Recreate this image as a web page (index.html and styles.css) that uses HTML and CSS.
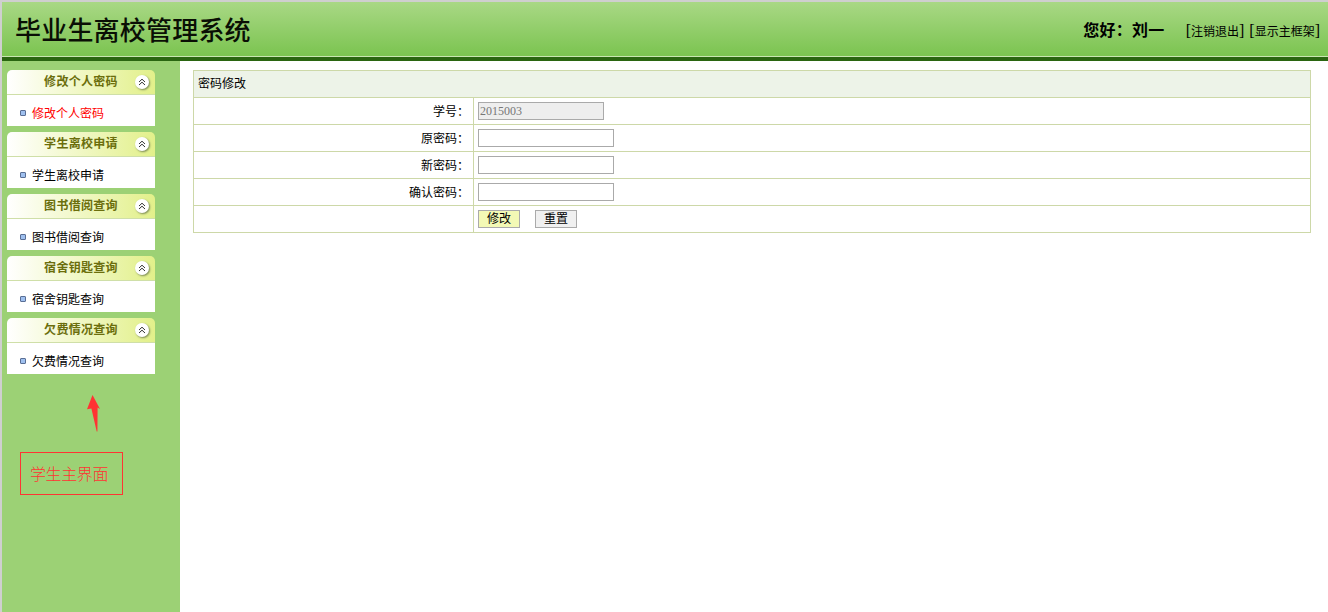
FILE: index.html
```html
<!DOCTYPE html>
<html lang="zh-CN">
<head>
<meta charset="utf-8">
<title>毕业生离校管理系统</title>
<link rel="stylesheet" href="styles.css">
</head>
<body>
<header class="top">
  <h1 class="brand">毕业生离校管理系统</h1>
  <div class="user">
    <span class="hello">您好：刘一</span>
    <a class="toplink" href="#"><span class="br">[</span>注销退出<span class="br">]</span></a>
    <a class="toplink" href="#"><span class="br">[</span>显示主框架<span class="br">]</span></a>
  </div>
</header>
<div class="bar"></div>
<div class="main">
  <aside class="side">
    <section class="panel">
      <div class="phead"><span class="ptitle">修改个人密码</span><span class="toggle"><svg viewBox="0 0 8 8" width="8" height="8"><path d="M1 4 4 1.2 7 4M1 7 4 4.2 7 7" fill="none" stroke="#333" stroke-width="1"/></svg></span></div>
      <div class="pbody"><i class="dot"></i><a class="item active" href="#">修改个人密码</a></div>
    </section>
    <section class="panel">
      <div class="phead"><span class="ptitle">学生离校申请</span><span class="toggle"><svg viewBox="0 0 8 8" width="8" height="8"><path d="M1 4 4 1.2 7 4M1 7 4 4.2 7 7" fill="none" stroke="#333" stroke-width="1"/></svg></span></div>
      <div class="pbody"><i class="dot"></i><a class="item" href="#">学生离校申请</a></div>
    </section>
    <section class="panel">
      <div class="phead"><span class="ptitle">图书借阅查询</span><span class="toggle"><svg viewBox="0 0 8 8" width="8" height="8"><path d="M1 4 4 1.2 7 4M1 7 4 4.2 7 7" fill="none" stroke="#333" stroke-width="1"/></svg></span></div>
      <div class="pbody"><i class="dot"></i><a class="item" href="#">图书借阅查询</a></div>
    </section>
    <section class="panel">
      <div class="phead"><span class="ptitle">宿舍钥匙查询</span><span class="toggle"><svg viewBox="0 0 8 8" width="8" height="8"><path d="M1 4 4 1.2 7 4M1 7 4 4.2 7 7" fill="none" stroke="#333" stroke-width="1"/></svg></span></div>
      <div class="pbody"><i class="dot"></i><a class="item" href="#">宿舍钥匙查询</a></div>
    </section>
    <section class="panel">
      <div class="phead"><span class="ptitle">欠费情况查询</span><span class="toggle"><svg viewBox="0 0 8 8" width="8" height="8"><path d="M1 4 4 1.2 7 4M1 7 4 4.2 7 7" fill="none" stroke="#333" stroke-width="1"/></svg></span></div>
      <div class="pbody"><i class="dot"></i><a class="item" href="#">欠费情况查询</a></div>
    </section>
    <svg class="arrow" viewBox="0 0 14 37" width="14" height="37"><path d="M5.5 0 13 14 10.6 12.6 10.4 36.5 9.7 36.5 4.4 13.5 0 14.3Z" fill="#ff3333"/></svg>
    <div class="note">学生主界面</div>
  </aside>
  <main class="content">
    <table class="form">
      <colgroup><col class="col-lab"><col></colgroup>
      <tr><td class="caption" colspan="2">密码修改</td></tr>
      <tr><td class="lab">学号：</td><td class="val"><input class="ipt short" type="text" value="2015003" readonly></td></tr>
      <tr><td class="lab">原密码：</td><td class="val"><input class="ipt" type="password"></td></tr>
      <tr><td class="lab">新密码：</td><td class="val"><input class="ipt" type="password"></td></tr>
      <tr><td class="lab">确认密码：</td><td class="val"><input class="ipt" type="password"></td></tr>
      <tr><td class="lab"></td><td class="val"><div class="btns"><button class="btn primary" type="button">修改</button><button class="btn" type="button">重置</button></div></td></tr>
    </table>
  </main>
</div>
</body>
</html>
```
FILE: styles.css
```css
* { box-sizing: border-box; }
html, body { margin: 0; padding: 0; }
body {
  width: 1328px;
  height: 612px;
  overflow: hidden;
  display: flex;
  flex-direction: column;
  border-top: 2px solid #cfcfcf;
  border-left: 2px solid #cfcfcf;
  background: #fff;
  font: 12px "Noto Sans CJK SC", "Liberation Sans", sans-serif;
  color: #000;
}
a { color: inherit; text-decoration: none; }

.top {
  height: 55px;
  flex: none;
  display: flex;
  align-items: center;
  justify-content: space-between;
  padding: 0 8px 0 13px;
  background: linear-gradient(#a9d885, #7bc450);
  border-bottom: 1px solid #c8e6b0;
}
.brand {
  margin: 0;
  font-size: 26px;
  line-height: 54px;
  font-weight: 500;
  color: #0a0f05;
  letter-spacing: .2px;
}
.user { display: flex; align-items: center; margin-top: 2px; }
.hello { font-size: 16px; font-weight: 700; margin-right: 16px; margin-top: -3px; letter-spacing: .3px; }
.toplink { font-size: 12px; margin-left: 5px; line-height: 20px; margin-top: 1px; }
.br { font-family: "Liberation Serif", serif; font-size: 16px; }
.bar { height: 4px; flex: none; background: #2a6510; }

.main { flex: 1; display: flex; min-height: 0; }
.side {
  width: 178px;
  flex: none;
  position: relative;
  padding: 9px 0 0 5px;
  background: #9cd175;
}
.panel { width: 148px; margin-bottom: 6px; }
.phead {
  height: 25px;
  position: relative;
  display: flex;
  align-items: center;
  justify-content: center;
  padding-bottom: 2px;
  border-bottom: 1px solid #cfdfa8;
  border-radius: 5px 5px 0 0;
  background: linear-gradient(90deg, #ffffff, #e2f08a);
}
.ptitle { font-size: 12px; font-weight: 700; color: #6b6e0c; line-height: 20px; letter-spacing: .3px; }
.toggle {
  position: absolute;
  right: 6px;
  top: 5px;
  width: 14px;
  height: 14px;
  display: flex;
  align-items: center;
  justify-content: center;
  border-radius: 50%;
  background: #fff;
  box-shadow: 1px 1px 2px #7a8a55;
}
.pbody {
  height: 31px;
  display: flex;
  align-items: center;
  padding: 4px 0 0 13px;
  background: #fff;
}
.dot {
  width: 6px;
  height: 6px;
  margin: 0 6px 0 0;
  border: 1px solid #5a6f95;
  background: #9fc0ef;
  border-radius: 1px;
}
.item { font-size: 12px; line-height: 16px; }
.item.active { color: #ff0000; }

.arrow { position: absolute; left: 85px; top: 334px; }
.note {
  position: absolute;
  left: 18px;
  top: 391px;
  width: 103px;
  height: 43px;
  border: 1px solid #ff3333;
  color: #ff3333;
  font-size: 16px;
  font-weight: 300;
  letter-spacing: -.4px;
  line-height: 41px;
  padding-left: 9px;
}

.content { flex: 1; padding: 9px 17px 0 13px; }
.form {
  width: 1118px;
  border-collapse: collapse;
  table-layout: fixed;
}
.col-lab { width: 280px; }
.form td {
  height: 27px;
  padding: 0;
  border: 1px solid #cdd8a8;
}
.form td.caption { background: #edf3e8; padding: 0 0 3px 4px; font-size: 12px; }
.form td.lab { text-align: right; padding: 0 4px 2px 0; }
.form td.val { padding-left: 4px; }
.ipt {
  display: block;
  width: 136px;
  height: 18px;
  padding: 0 1px;
  border: 1px solid #aaaaaa;
  background: #fff;
  font: 12px "Liberation Serif", serif;
  color: #777;
  outline: none;
}
.ipt.short { width: 126px; background: #eeeeee; }
.btns { display: flex; gap: 15px; }
.btn {
  width: 42px;
  height: 18px;
  padding: 0 0 2px;
  border: 1px solid #aaaaaa;
  background: #f0f0f0;
  font: 12px/14px "Noto Sans CJK SC", sans-serif;
  color: #000;
}
.btn.primary { background: #f3f9b5; }
```
